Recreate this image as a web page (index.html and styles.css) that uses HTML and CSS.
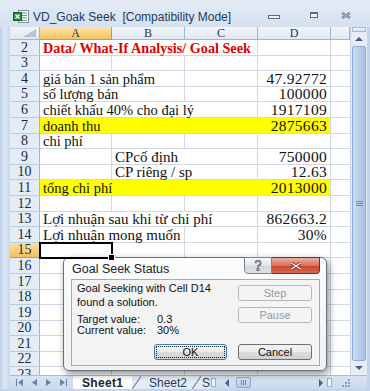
FILE: index.html
```html
<!DOCTYPE html>
<html lang="vi">
<head>
<meta charset="utf-8">
<title>VD_Goak Seek</title>
<link rel="stylesheet" href="styles.css">
</head>
<body>
<div class="window">
  <div class="titlebar">
    <svg class="appicon" viewBox="0 0 16 13" width="16" height="13">
      <rect x="5.5" y="0.5" width="10" height="12" fill="#fff" stroke="#7d8fa6"/>
      <path d="M9 3h5M9 5.5h5M9 8h5M9 10.5h5" stroke="#5aa266" stroke-width="1"/>
      <rect x="0.5" y="2.5" width="8" height="8" fill="#2a8a3e" stroke="#1b5e2a"/>
      <path d="M2.5 4.5l4 4M6.5 4.5l-4 4" stroke="#fff" stroke-width="1.3"/>
    </svg>
    <span class="title">VD_Goak Seek  [Compatibility Mode]</span>
    <div class="winbtns">
      <svg class="wb-min" viewBox="0 0 12 4" width="12" height="4"><rect x="0.5" y="0.5" width="11" height="3" fill="#eef3f9" stroke="#5d6d84"/></svg>
      <svg class="wb-max" viewBox="0 0 8 6" width="8" height="6"><rect x="0.5" y="0.5" width="7" height="5" fill="#eef3f9" stroke="#5d6d84"/><path d="M1 1.5h6" stroke="#5d6d84"/></svg>
      <svg class="wb-close" viewBox="0 0 10 7" width="10" height="7"><path d="M1 1l8 5M9 1L1 6" stroke="#5d6d84" stroke-width="2.2"/><path d="M1 1l8 5M9 1L1 6" stroke="#e4ebf5" stroke-width="0.7"/></svg>
    </div>
  </div>

  <div class="main">
    <div class="lframe"></div>
    <div class="content">
      <div class="sheetrow">
        <div class="sheet">
          <div class="corner"></div><div class="ch hl">A</div><div class="ch">B</div><div class="ch">C</div><div class="ch">D</div><div class="ch e"></div>

          <div class="rh">2</div><div class="c span3 red">Data/ What-If Analysis/ Goal Seek</div><div class="c"></div><div class="c e"></div>
          <div class="rh">3</div><div class="c"></div><div class="c"></div><div class="c"></div><div class="c"></div><div class="c e"></div>
          <div class="rh">4</div><div class="c span2">giá bán 1 sản phẩm</div><div class="c"></div><div class="c num">47.92772</div><div class="c e"></div>
          <div class="rh">5</div><div class="c span2">số lượng bán</div><div class="c"></div><div class="c num">100000</div><div class="c e"></div>
          <div class="rh">6</div><div class="c span3">chiết khấu 40% cho đại lý</div><div class="c num">1917109</div><div class="c e"></div>
          <div class="rh">7</div><div class="c span3 yel">doanh thu</div><div class="c num yel">2875663</div><div class="c e"></div>
          <div class="rh">8</div><div class="c">chi phí</div><div class="c"></div><div class="c"></div><div class="c"></div><div class="c e"></div>
          <div class="rh">9</div><div class="c"></div><div class="c span2 big">CPcố định</div><div class="c num">750000</div><div class="c e"></div>
          <div class="rh">10</div><div class="c"></div><div class="c span2 big">CP riêng / sp</div><div class="c num">12.63</div><div class="c e"></div>
          <div class="rh">11</div><div class="c span3 yel">tổng chi phí</div><div class="c num yel">2013000</div><div class="c e"></div>
          <div class="rh">12</div><div class="c"></div><div class="c"></div><div class="c"></div><div class="c"></div><div class="c e"></div>
          <div class="rh">13</div><div class="c span3 big">Lợi nhuận sau khi từ chi phí</div><div class="c num">862663.2</div><div class="c e"></div>
          <div class="rh">14</div><div class="c span2 big">Lợi nhuận mong muốn</div><div class="c"></div><div class="c num">30%</div><div class="c e"></div>
          <div class="rh hl">15</div><div class="c sel"></div><div class="c"></div><div class="c"></div><div class="c"></div><div class="c e"></div>
          <div class="rh">16</div><div class="c"></div><div class="c"></div><div class="c"></div><div class="c"></div><div class="c e"></div>
          <div class="rh">17</div><div class="c"></div><div class="c"></div><div class="c"></div><div class="c"></div><div class="c e"></div>
          <div class="rh">18</div><div class="c"></div><div class="c"></div><div class="c"></div><div class="c"></div><div class="c e"></div>
          <div class="rh">19</div><div class="c"></div><div class="c"></div><div class="c"></div><div class="c"></div><div class="c e"></div>
          <div class="rh">20</div><div class="c"></div><div class="c"></div><div class="c"></div><div class="c"></div><div class="c e"></div>
          <div class="rh">21</div><div class="c"></div><div class="c"></div><div class="c"></div><div class="c"></div><div class="c e"></div>
          <div class="rh">22</div><div class="c"></div><div class="c"></div><div class="c"></div><div class="c"></div><div class="c e"></div>
          <div class="rh">23</div><div class="c"></div><div class="c"></div><div class="c"></div><div class="c"></div><div class="c e"></div>
        </div>
        <div class="vscroll">
          <div class="vs-split"></div>
          <div class="vs-btn"><span class="tri-up"></span></div>
          <div class="vs-thumb"><span class="grip-h"></span></div>
          <div class="vs-btn"><span class="tri-down"></span></div>
        </div>
      </div>
      <div class="tabbar">
        <div class="nav">
          <svg viewBox="0 0 7 7" width="7" height="7"><path d="M0.5 0v7" stroke="#6a82a6"/><path d="M7 0v7L2 3.5z" fill="#6a82a6"/></svg>
          <svg viewBox="0 0 5 7" width="5" height="7"><path d="M5 0v7L0 3.5z" fill="#6a82a6"/></svg>
          <svg viewBox="0 0 5 7" width="5" height="7"><path d="M0 0v7L5 3.5z" fill="#6a82a6"/></svg>
          <svg viewBox="0 0 7 7" width="7" height="7"><path d="M0 0v7L5 3.5z" fill="#6a82a6"/><path d="M6.5 0v7" stroke="#6a82a6"/></svg>
        </div>
        <div class="tab active">Sheet1</div>
        <div class="slant"></div>
        <div class="tab">Sheet2</div>
        <div class="slant"></div>
        <div class="tab part">S</div>
        <div class="split"></div>
        <div class="hscroll">
          <span class="tri-left"></span>
          <span class="hthumb"><span class="grip-v"></span></span>
          <span class="htrack"></span>
          <span class="tri-right"></span>
        </div>
        <div class="split"></div>
        <svg class="resize" viewBox="0 0 10 10" width="10" height="10">
          <rect x="7" y="1" width="2" height="2" fill="#8da3c2"/>
          <rect x="4" y="4" width="2" height="2" fill="#8da3c2"/><rect x="7" y="4" width="2" height="2" fill="#8da3c2"/>
          <rect x="1" y="7" width="2" height="2" fill="#8da3c2"/><rect x="4" y="7" width="2" height="2" fill="#8da3c2"/><rect x="7" y="7" width="2" height="2" fill="#8da3c2"/>
        </svg>
      </div>
    </div>
    <div class="rframe"></div>
  </div>
  <div class="bframe"></div>

  <div class="dialog">
    <div class="dlg-head">
      <span class="dlg-caption">Goal Seek Status</span>
      <div class="dlg-ctrls">
        <span class="help">
          <svg viewBox="0 0 8 11" width="8" height="11"><path d="M1.6 3.2a2.4 2.4 0 1 1 3.4 2.2c-.7.4-1 .8-1 1.6v.6" fill="none" stroke="#4a4f57" stroke-width="2"/><path d="M1.6 3.2a2.4 2.4 0 1 1 3.4 2.2c-.7.4-1 .8-1 1.6v.6" fill="none" stroke="#f1f2f4" stroke-width="0.6"/><rect x="3" y="8.6" width="2" height="2" fill="#f1f2f4" stroke="#4a4f57" stroke-width="0.8"/></svg>
        </span>
        <span class="dclose">
          <svg viewBox="0 0 12 8" width="12" height="8"><path d="M1.5 1l9 6M10.5 1l-9 6" stroke="#7d2a1c" stroke-width="3"/><path d="M1.5 1l9 6M10.5 1l-9 6" stroke="#fff" stroke-width="1.4"/></svg>
        </span>
      </div>
    </div>
    <div class="panel">
      <div class="panel-top">
        <div class="msg">
          <p class="msg-lines">Goal Seeking with Cell D14<br>found a solution.</p>
          <div class="vals">
            <span>Target value:</span><span>0.3</span>
            <span>Current value:</span><span>30%</span>
          </div>
        </div>
        <div class="side">
          <button class="btn" disabled>Step</button>
          <button class="btn" disabled>Pause</button>
        </div>
      </div>
      <div class="panel-bottom">
        <button class="btn ok"><span class="focus">OK</span></button>
        <button class="btn">Cancel</button>
      </div>
    </div>
  </div>
</div>
</body>
</html>
```
FILE: styles.css
```css
* { box-sizing: border-box; }
html, body { margin: 0; padding: 0; }
body {
  width: 370px;
  height: 391px;
  overflow: hidden;
  background: #cddbee;
  font-family: "Liberation Sans", Arial, sans-serif;
}
.window {
  position: relative;
  width: 370px;
  height: 391px;
  display: flex;
  flex-direction: column;
  background: linear-gradient(#e4ecf6, #d3e0f0 30px, #c9d8ec);
}

/* title bar */
.titlebar {
  height: 27px;
  flex: none;
  display: flex;
  align-items: center;
  padding: 6px 0 0 13px;
}
.appicon { flex: none; margin-right: 4px; }
.title {
  font-size: 12px;
  color: #1e395b;
  white-space: pre;
}
.winbtns {
  margin-left: auto;
  display: flex;
  align-items: center;
  padding-right: 19px;
}
.wb-min { margin-top: 1px; }
.wb-max { margin-left: 30px; margin-top: -3px; }
.wb-close { margin-left: 23px; margin-top: -3px; }

/* main area */
.main { display: flex; height: 362px; flex: none; }
.lframe {
  width: 10px;
  background: linear-gradient(90deg, #bfd0e8, #dde8f5 45%, #c6d6ec);
}
.rframe { width: 3px; background: #c3d3ea; }
.bframe { height: 2px; background: #c3d3ea; }
.content { width: 357px; display: flex; flex-direction: column; }
.sheetrow { height: 348px; display: flex; }

/* grid */
.sheet {
  width: 340px;
  height: 348px;
  overflow: hidden;
  background: #fff;
  display: grid;
  grid-template-columns: 30px 72px 73px 73px 73px 19px;
  grid-template-rows: 13px;
  grid-auto-rows: 15.6px;
  align-content: start;
}
.corner {
  border-right: 1px solid #9eb6ce;
  border-bottom: 1px solid #9eb6ce;
  background:
    linear-gradient(to bottom right, transparent 50%, #b7c3d2 50%) right 3px bottom 2px / 13px 8px no-repeat,
    linear-gradient(#f1f5fa, #dfe7f1);
}
.ch {
  border-right: 1px solid #9eb6ce;
  border-bottom: 1px solid #9eb6ce;
  background: linear-gradient(#f3f6fb, #e0e8f2);
  font-family: "Liberation Serif", "DejaVu Serif", serif;
  font-size: 12px;
  line-height: 12px;
  color: #1f3550;
  text-align: center;
}
.ch.hl {
  background: linear-gradient(#fbe3a8, #f3c463);
  border-right-color: #c09a55;
  border-bottom-color: #c09a55;
}
.rh {
  border-right: 1px solid #9eb6ce;
  border-bottom: 1px solid #b9cbe0;
  background: #e4ecf7;
  font-family: "Liberation Serif", "DejaVu Serif", serif;
  font-size: 14px;
  line-height: 14px;
  color: #1d2a3a;
  display: flex;
  align-items: flex-end;
  justify-content: center;
}
.rh.hl {
  background: linear-gradient(#fbe0a0, #f3c05e);
  border-bottom-color: #c09a55;
}
.c {
  border-right: 1px solid #d0d7e5;
  border-bottom: 1px solid #d0d7e5;
  font-family: "Liberation Serif", "DejaVu Serif", serif;
  font-size: 14.5px;
  line-height: 14px;
  color: #111;
  white-space: nowrap;
  overflow: visible;
  display: flex;
  align-items: flex-end;
  padding: 0 3px 0 3px;
}
.c.e { border-right: none; }
.span2 { grid-column: span 2; }
.span3 { grid-column: span 3; }
.big { font-size: 15px; }
.red { color: #e00000; font-weight: bold; font-size: 14.2px; }
.num { justify-content: flex-end; font-size: 15.5px; letter-spacing: 0.3px; }
.yel { background: #ffff00; border-right-color: #ffff00; }
.num.yel { border-right-color: #d0d7e5; }
.sel {
  position: relative;
  z-index: 1;
  outline: 2px solid #000;
  outline-offset: -1px;
}
.sel::after {
  content: "";
  position: absolute;
  right: -4px;
  bottom: -4px;
  width: 5px;
  height: 5px;
  background: #000;
  border: 1px solid #fff;
}

/* vertical scrollbar */
.vscroll {
  width: 17px;
  display: flex;
  flex-direction: column;
  background: #e6edf6;
  border-left: 1px solid #c7d5e7;
}
.vs-split {
  height: 5px;
  margin: 0 1px;
  border: 1px solid #a4b9d4;
  background: linear-gradient(#f2f6fb, #d3dfee);
}
.vs-btn {
  height: 14px;
  display: flex;
  align-items: center;
  justify-content: center;
}
.tri-up, .tri-down, .tri-left, .tri-right { width: 0; height: 0; display: block; }
.tri-up { border-left: 4px solid transparent; border-right: 4px solid transparent; border-bottom: 4px solid #4a5f80; }
.tri-down { border-left: 4px solid transparent; border-right: 4px solid transparent; border-top: 4px solid #4a5f80; }
.tri-left { border-top: 4px solid transparent; border-bottom: 4px solid transparent; border-right: 4px solid #4a5f80; }
.tri-right { border-top: 4px solid transparent; border-bottom: 4px solid transparent; border-left: 4px solid #4a5f80; }
.vs-thumb {
  flex: 1;
  margin: 0 1px;
  border: 1px solid #8eaad0;
  border-radius: 2px;
  background: linear-gradient(90deg, #cddff4, #b6cdeb 50%, #a9c3e6);
  display: flex;
  align-items: center;
  justify-content: center;
}
.grip-h {
  width: 7px;
  height: 5px;
  border-top: 1px solid #6e8bb5;
  border-bottom: 1px solid #6e8bb5;
  background: linear-gradient(#6e8bb5, #6e8bb5) center / 100% 1px no-repeat;
}

/* tab bar */
.tabbar {
  height: 14px;
  display: flex;
  align-items: stretch;
  background: linear-gradient(#d9e4f2, #cbd9ec);
  border-top: 1px solid #a9bdd8;
  font-size: 12px;
}
.nav {
  width: 63px;
  display: flex;
  align-items: center;
  gap: 9px;
  padding-left: 6px;
}
.tab {
  display: flex;
  align-items: center;
  padding: 0 5px 0 8px;
  color: #2b3e58;
  background: #e3ebf6;
  line-height: 12px;
  white-space: nowrap;
}
.tab.active {
  background: #fff;
  font-weight: bold;
  color: #1b2433;
  width: 59px;
  padding-left: 9px;
  letter-spacing: 0.3px;
}
.tab.part { padding: 0 1px 0 1px; width: 9px; overflow: hidden; }
.slant {
  width: 9px;
  background: linear-gradient(to bottom right, #e3ebf6 45%, #7f97b8 48%, #7f97b8 54%, #e3ebf6 57%);
}
.split {
  width: 5px;
  margin: 2px 1px;
  border: 1px solid #98afcd;
  background: #f2f6fb;
}
.hscroll {
  width: 109px;
  display: flex;
  align-items: center;
  padding: 0 3px 0 8px;
}
.hthumb {
  width: 15px;
  height: 11px;
  margin-left: 7px;
  border: 1px solid #8eaad0;
  border-radius: 2px;
  background: linear-gradient(#d3e2f5, #b3cbea);
  display: flex;
  align-items: center;
  justify-content: center;
}
.grip-v {
  width: 5px;
  height: 5px;
  border-left: 1px solid #6e8bb5;
  border-right: 1px solid #6e8bb5;
  background: linear-gradient(#6e8bb5, #6e8bb5) center / 1px 100% no-repeat;
}
.htrack { flex: 1; }
.resize { align-self: center; margin-left: 8px; }

/* dialog */
.dialog {
  position: absolute;
  left: 63px;
  top: 257px;
  width: 264px;
  height: 114px;
  border: 1px solid #66707c;
  border-radius: 6px;
  background: linear-gradient(#fbfcfd, #eff1f4);
  box-shadow: 2px 3px 7px rgba(0, 0, 0, 0.45);
  display: flex;
  flex-direction: column;
  padding: 0 6px 4px 7px;
}
.dlg-head { height: 21px; display: flex; align-items: flex-start; }
.dlg-caption {
  font-size: 12.5px;
  color: #222;
  margin: 4px 0 0 1px;
}
.dlg-ctrls { margin-left: auto; margin-top: -1px; display: flex; }
.help {
  width: 28px;
  height: 17px;
  border: 1px solid #7b838e;
  border-radius: 0 0 0 4px;
  background: linear-gradient(#f7f8f9, #e3e5e8 50%, #d3d6db 51%, #dfe2e6);
  display: flex;
  align-items: center;
  justify-content: center;
}
.dclose {
  width: 48px;
  height: 17px;
  border: 1px solid #7a2e22;
  border-left: none;
  border-radius: 0 0 4px 0;
  background: linear-gradient(#eab0a3, #d8715b 50%, #c5442b 51%, #d56a50);
  display: flex;
  align-items: center;
  justify-content: center;
}
.panel {
  flex: 1;
  border: 1px solid #a7abb1;
  background: #f3f3f3;
  display: flex;
  flex-direction: column;
  padding: 5px 7px 5px 5px;
  font-size: 11px;
  color: #111;
}
.panel-top { display: flex; }
.msg { flex: 1; margin-top: -4px; }
.msg-lines { margin: 0; line-height: 14px; }
.vals {
  display: grid;
  grid-template-columns: 80px auto;
  line-height: 11px;
  margin-top: 5px;
}
.side { display: flex; flex-direction: column; gap: 6px; }
.panel-bottom {
  margin-top: auto;
  display: flex;
  justify-content: flex-end;
  gap: 11px;
}
.btn {
  width: 74px;
  height: 16px;
  padding: 0;
  font-family: "Liberation Sans", Arial, sans-serif;
  font-size: 11px;
  line-height: 14px;
  color: #111;
  border: 1px solid #707070;
  border-radius: 3px;
  background: linear-gradient(#f3f3f3, #ebebeb 50%, #dcdcdc 51%, #d0d0d0);
}
.btn:disabled {
  color: #9a9a9a;
  border-color: #b5b9bd;
  background: #f4f4f4;
}
.btn.ok {
  width: 73px;
  border-color: #3c7fb1;
  padding: 1px;
  display: flex;
}
.focus {
  flex: 1;
  border: 1px dotted #222;
  line-height: 11px;
}
```
